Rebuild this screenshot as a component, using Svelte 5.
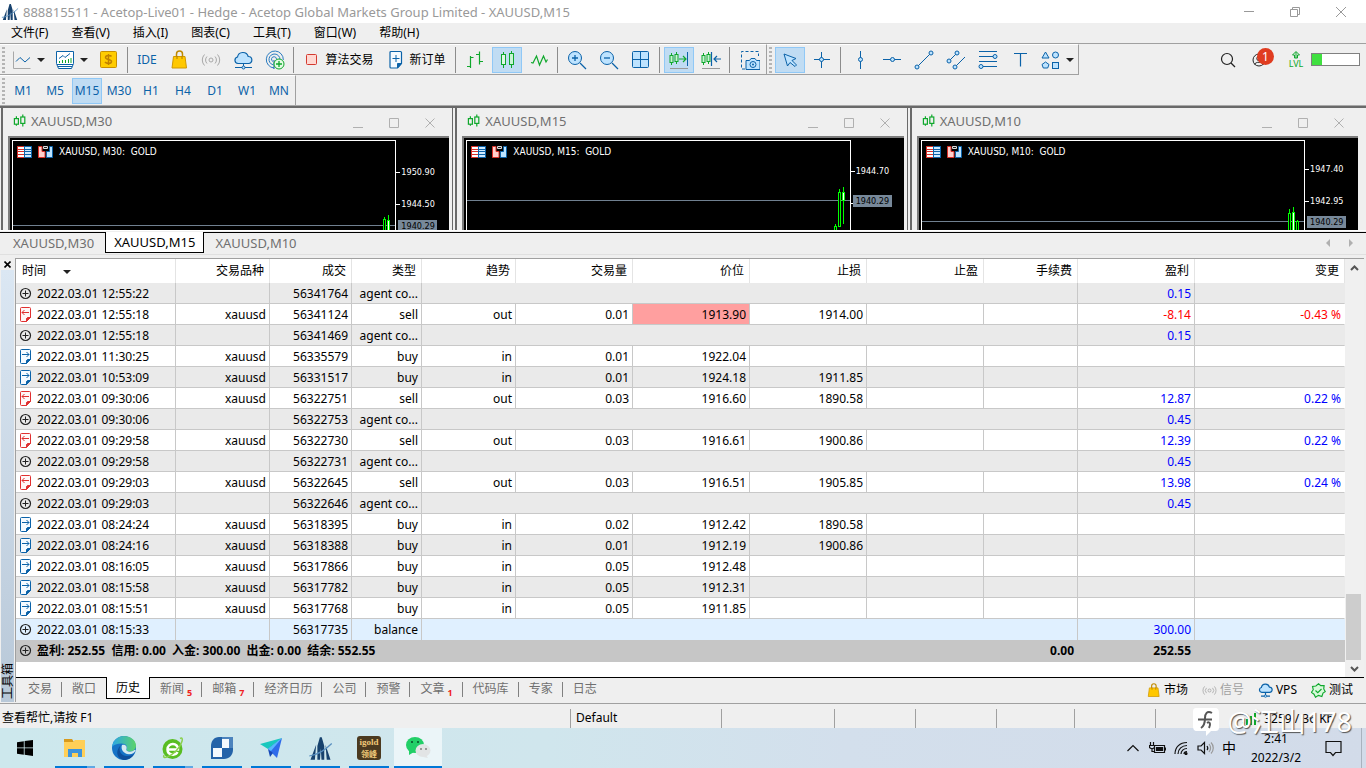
<script>
  const menus = ['文件(F)', '查看(V)', '插入(I)', '图表(C)', '工具(T)', '窗口(W)', '帮助(H)'];
  const frames = ['M1', 'M5', 'M15', 'M30', 'H1', 'H4', 'D1', 'W1', 'MN'];

  let frame = $state('M15');
  let chartTab = $state('XAUUSD,M15');
  let boxTab = $state('历史');

  const B = '#0b62a8';
  const L = '#bde3ff';
  const G = '#0fa82c';
  const R = '#e03030';

  // inner svg markup, drawn on a 20x20 grid
  const icons = {
    line: `<path d="M1.5 1.5v17h17" stroke="#a8a8a8"/><path d="M4 11.5l4-4 5 4.5 5-4.5" stroke="${B}"/>`,
    indicator: `<path d="M1.5 1.5h17v12l-2 5h-13l-2-5z" fill="#fff" stroke="${B}"/><path d="M2 14.5h16M3 16.5h14" stroke="${B}"/><path d="M4 8.5l4-3 2 2 5-4" stroke="${B}"/><path d="M4.5 13v-2M7.5 13v-3M10.5 13v-3M13.5 13v-4M16 13v-5" stroke="${G}"/>`,
    dollar: `<rect x="1.5" y="1.5" width="16" height="16" rx="1" fill="#ffcc00" stroke="#c89000"/><path d="M12.5 6.5c-1-1.5-6-1.5-6 1s6 1.5 6 4-5 2.5-6.5.5M9.5 4v11" stroke="#c08000" stroke-width="1.5"/>`,
    bag: `<path d="M7.5 7V4a3 3 0 0 1 6 0v3" stroke="#c08a00" stroke-width="1.5"/><path d="M4.5 6.5h11.5l1.5 11.5h-14.5z" fill="#ffc800" stroke="#d09800"/><path d="M8 6v3M13 6v3" stroke="#b07c00"/>`,
    signal: `<circle cx="10" cy="10" r="2"/><path d="M6 6.5a5 5 0 0 0 0 7M14 6.5a5 5 0 0 1 0 7M3.5 4.5a8 8 0 0 0 0 11M16.5 4.5a8 8 0 0 1 0 11"/>`,
    cloud: `<path d="M5 13.5a3.3 3.3 0 0 1-.5-6.5 5.5 5.5 0 0 1 10.7-.5 3.5 3.5 0 0 1 .3 7z" fill="${L}" stroke="${B}" stroke-width="1.2"/><path d="M10.5 14v2M2 17.5h17" stroke="${B}"/><circle cx="10.5" cy="17.5" r="1.5" fill="${L}" stroke="${B}"/>`,
    vps: `<path d="M5 12.5a3.3 3.3 0 0 1-.5-6.5 5.5 5.5 0 0 1 10.7-.5 3.5 3.5 0 0 1 .3 7z" fill="${L}" stroke="${B}" stroke-width="1.6"/><path d="M10 13v4M4 17.5h12" stroke="${B}" stroke-width="1.6"/><circle cx="10" cy="17.5" r="1.6" fill="${L}" stroke="${B}"/>`,
    radar: `<path d="M9 18a8.5 8.5 0 1 1 9.3-8M8 14.8a5.5 5.5 0 1 1 7-5.3M8 11.5a2.5 2.5 0 1 1 3.5-2.5" stroke="#2b7cc0"/><path d="M9 10v9" stroke="${B}"/><circle cx="14" cy="14" r="5" fill="#e4fbe4" stroke="${G}"/><path d="M14 11v6M11 14h6" stroke="${G}" stroke-width="1.3"/>`,
    algo: `<rect x="4.5" y="4.5" width="10" height="10" rx="1" fill="#ffd8d2" stroke="#d43a30"/>`,
    order: `<path d="M5 1.5h9.5a1 1 0 0 1 1 1v11l-4 4.5H5a1 1 0 0 1-1-1V2.5a1 1 0 0 1 1-1z" fill="#f4faff" stroke="${B}" stroke-width="1.2"/><path d="M15.5 13.5l-4 4.5v-4.5z" fill="${B}" stroke="${B}"/><path d="M10 5v7M6.5 8.5h7" stroke="${B}"/>`,
    bars: `<path d="M5.5 6v12M2 16.5h3.5M5.5 7.5h3M14.5 1.5v13M11 4.5h3.5M14.5 11.5h3.5" stroke="${G}" stroke-width="1.2"/>`,
    candles: `<path d="M6.5 2v16M14.5 1v17" stroke="${G}"/><rect x="4.5" y="4.5" width="4" height="10" fill="#dff7e6" stroke="${G}"/><rect x="12.5" y="3.5" width="4" height="11" fill="#c8f4d4" stroke="${G}"/>`,
    zigzag: `<path d="M2 12.5l2 .5 3.5-7 3 9 4-9 2.5 6 1.5-2.5" stroke="${G}" stroke-width="1.2"/>`,
    plus: `<circle cx="8" cy="8" r="6.5" fill="${L}" stroke="${B}"/><path d="M13 13l6 6" stroke="${B}" stroke-width="1.3"/><path d="M8 5v6M5 8h6" stroke="${B}" stroke-width="1.3"/>`,
    minus: `<circle cx="8" cy="8" r="6.5" fill="${L}" stroke="${B}"/><path d="M13 13l6 6" stroke="${B}" stroke-width="1.3"/><path d="M5 8h6" stroke="${B}" stroke-width="1.3"/>`,
    tile: `<rect x="1.5" y="1.5" width="16" height="16" rx="1" fill="${L}" stroke="${B}"/><path d="M9.5 2v15M2 9.5h15" stroke="${B}"/>`,
    scroll: `<path d="M2.5 3v12M7.5 2v12" stroke="${G}"/><rect x="1" y="5.5" width="3" height="7" fill="#c8f4d4" stroke="${G}"/><rect x="6" y="4.5" width="3" height="7" fill="#c8f4d4" stroke="${G}"/><path d="M10 9h7M14 6l3 3-3 3" stroke="${G}" stroke-width="1.2"/><path d="M18.5 2v14" stroke="${B}"/><path d="M1 18.5h18" stroke="#999"/>`,
    shift: `<path d="M2.5 3v12M7.5 2v12" stroke="${G}"/><rect x="1" y="5.5" width="3" height="7" fill="#c8f4d4" stroke="${G}"/><rect x="6" y="4.5" width="3" height="7" fill="#c8f4d4" stroke="${G}"/><path d="M10.5 2v14M13 9h7M16 6l-3 3 3 3" stroke="${B}" stroke-width="1.2"/><path d="M1 18.5h18" stroke="#999"/>`,
    camera: `<path d="M5 19H1.5V1.5h17V6" stroke="${B}" stroke-dasharray="3 2"/><path d="M6 19.5v-9h3.5l1.5-2h4l1.5 2h3.5v9z" fill="${L}" stroke="${B}"/><circle cx="13" cy="14.5" r="3" stroke="${B}"/><circle cx="13" cy="14.5" r="1" fill="${B}" stroke="none"/>`,
    cursor: `<path d="M4 4l3.5 12 2.5-3.5 5 4 1.5-1.5-4.5-4.5 4-2z" fill="${L}" stroke="${B}"/>`,
    cross: `<path d="M9.5 2v16M2 9.5h16" stroke="${B}"/><circle cx="9.5" cy="9.5" r="2" fill="${L}" stroke="${B}"/>`,
    vline: `<path d="M10.5 1v18" stroke="${B}"/><circle cx="10.5" cy="9.5" r="2" fill="${L}" stroke="${B}"/>`,
    hline: `<path d="M1 9.5h18" stroke="${B}"/><circle cx="10.5" cy="9.5" r="2" fill="${L}" stroke="${B}"/>`,
    trend: `<path d="M3 17L17 3" stroke="${B}"/><circle cx="3" cy="17" r="2" fill="${L}" stroke="${B}"/><circle cx="17" cy="3" r="2" fill="${L}" stroke="${B}"/>`,
    channel: `<path d="M3 11l8-8M9 17L19 7" stroke="${B}"/><circle cx="3" cy="11" r="2" fill="${L}" stroke="${B}"/><circle cx="11" cy="3" r="2" fill="${L}" stroke="${B}"/><circle cx="9" cy="17" r="2" fill="${L}" stroke="${B}"/>`,
    fibo: `<path d="M1 1.5h18M1 6.5h18M1 11.5h18M1 16.5h18" stroke="${B}"/><circle cx="17" cy="6.5" r="2" fill="${L}" stroke="${B}"/><circle cx="3" cy="16.5" r="2" fill="${L}" stroke="${B}"/>`,
    text: `<path d="M4 3.5h13M10.5 3.5v13" stroke="${B}" stroke-width="1.2"/>`,
    shapes: `<path d="M4.5 2l3.5 6h-7z" fill="${L}" stroke="${B}"/><circle cx="14.5" cy="5" r="3" fill="${L}" stroke="${B}"/><path d="M4.5 12l3.5 2.5-1.3 3.5h-4.4l-1.3-3.5z" fill="${L}" stroke="${B}"/><rect x="11.5" y="12.5" width="6" height="6" fill="${L}" stroke="${B}"/>`,
    search: `<circle cx="9" cy="9" r="5.5" stroke="#222" stroke-width="1.2"/><path d="M13 13l4 4" stroke="#222" stroke-width="1.2"/>`,
    user: `<circle cx="7" cy="10" r="6" stroke="#222"/><circle cx="7" cy="8.5" r="2.2" stroke="#222"/><path d="M2.5 14.5c1-3 8-3 9 0" stroke="#222"/>`,
    lvl: `<path d="M10 1.5l3.5 3.5h-2v3h-3v-3h-2zM10 2v6" stroke="${G}"/>`,
    test: `<path d="M10 1l3 2.5h4.5L17 8l2 3.5-3 2L14.5 18 10 16.5 6 19l-2-4-3.5-2.5L3 9 2 4.5l4.5-.5z" fill="#d8fadb" stroke="${G}" stroke-width="1.5"/><path d="M6 10l3 3 5-5" stroke="${G}" stroke-width="1.5"/>`,
    agent: `<circle cx="9.5" cy="10.5" r="5" stroke="#222" stroke-width="1.2"/><path d="M9.5 7.5v6M6.5 10.5h6" stroke="#222"/>`,
    sell: `<path d="M5.5 3.5h8a1 1 0 0 1 1 1v9l-4 4h-5a1 1 0 0 1-1-1v-12a1 1 0 0 1 1-1z" fill="#fff8f8" stroke="${R}"/><path d="M14.5 13.5l-4 4v-3l1-1z" fill="${R}" stroke="${R}"/><path d="M6 8.5h7M8.5 6L6 8.5l2.5 2.5" stroke="${R}"/>`,
    buy: `<path d="M5.5 3.5h8a1 1 0 0 1 1 1v9l-4 4h-5a1 1 0 0 1-1-1v-12a1 1 0 0 1 1-1z" fill="#f6fbff" stroke="${B}"/><path d="M14.5 13.5l-4 4v-3l1-1z" fill="${B}" stroke="${B}"/><path d="M6 8.5h7M10.5 6l2.5 2.5-2.5 2.5" stroke="${B}"/>`,
    mdi: `<path d="M5.5 4v12M13.5 2v15" stroke="${G}" stroke-width="1.5"/><rect x="3" y="7" width="5" height="7" fill="#efefef" stroke="${G}" stroke-width="1.5"/><rect x="11" y="5" width="5" height="8" fill="#efefef" stroke="${G}" stroke-width="1.5"/>`,
    app: `<path d="M9.5 1h1.5l2 7v11h-2.2l-.6-9-.6 9H7.5V8z" fill="#17426e" stroke="none"/><path d="M6.5 7l-4.5 12h3.5zM14 7l4 12h-3z" fill="#17426e" stroke="none"/><path d="M1 16c7-1 12-4 18-10" stroke="#5a90c0"/>`
  };

  const tools = [
    { icon: 'line', label: '图表类型', w: 40, caret: true },
    { icon: 'indicator', label: '指标', w: 42, caret: true },
    { icon: 'dollar', label: '报价' },
    null,
    { text: 'IDE', label: 'IDE' },
    { icon: 'bag', label: '市场' },
    { icon: 'signal', label: '信号', grey: true },
    { icon: 'cloud', label: 'VPS' },
    { icon: 'radar', label: '订阅' },
    null,
    { icon: 'algo', label: '算法交易', text: '算法交易', w: 80 },
    { icon: 'order', label: '新订单', text: '新订单', w: 72 },
    null,
    { icon: 'bars', label: '柱状图' },
    { icon: 'candles', label: '蜡烛图', on: true },
    { icon: 'zigzag', label: '线图' },
    null,
    { icon: 'plus', label: '放大' },
    { icon: 'minus', label: '缩小' },
    { icon: 'tile', label: '平铺' },
    null,
    { icon: 'scroll', label: '自动滚动', on: true },
    { icon: 'shift', label: '图表平移' },
    null,
    { icon: 'camera', label: '截图', w: 32 }
  ];

  const drawTools = [
    { icon: 'cursor', label: '光标', on: true },
    { icon: 'cross', label: '十字线' },
    null,
    { icon: 'vline', label: '垂直线' },
    { icon: 'hline', label: '水平线' },
    { icon: 'trend', label: '趋势线' },
    { icon: 'channel', label: '通道' },
    { icon: 'fibo', label: '斐波那契' },
    { icon: 'text', label: '文本' },
    { icon: 'shapes', label: '图形', w: 40, caret: true }
  ];

  // candles are [x from the right edge, wick top, body top, body bottom, wick bottom, filled]
  const charts = [
    { tf: 'M30', marks: [['1950.90', 32], ['1944.50', 64]], price: 84, candles: [[11, 76, 78, 92, 92], [7, 74, 79, 92, 92, 1]] },
    { tf: 'M15', marks: [['1944.70', 31], ['', 63]], price: 59, candles: [[15, 83, 85, 92, 92], [11, 48, 51, 85, 85], [7, 46, 51, 59, 83, 1]] },
    { tf: 'M10', marks: [['1947.40', 29], ['1942.95', 61]], price: 80, candles: [[15, 68, 72, 92, 92], [11, 66, 71, 92, 92, 1], [7, 79, 80, 92, 92]] }
  ];

  const cols = [
    ['时间', 160], ['交易品种', 94], ['成交', 82], ['类型', 70], ['趋势', 94], ['交易量', 117],
    ['价位', 117], ['止损', 117], ['止盈', 117], ['手续费', 94], ['盈利', 117], ['变更', 150]
  ];

  const agent = (time, id, profit, type = 'agent co...') => ({ time, id, type, profit, wide: true });
  const deal = (time, id, type, vol, price, sl = '', profit = '', change = '') => ({ time, id, type, vol, price, sl, profit, change });

  const rows = [
    agent('12:55:22', 56341764, '0.15'),
    { ...deal('12:55:18', 56341124, 'sell', '0.01', '1913.90', '1914.00', '-8.14', '-0.43 %'), hit: true },
    agent('12:55:18', 56341469, '0.15'),
    deal('11:30:25', 56335579, 'buy', '0.01', '1922.04'),
    deal('10:53:09', 56331517, 'buy', '0.01', '1924.18', '1911.85'),
    deal('09:30:06', 56322751, 'sell', '0.03', '1916.60', '1890.58', '12.87', '0.22 %'),
    agent('09:30:06', 56322753, '0.45'),
    deal('09:29:58', 56322730, 'sell', '0.03', '1916.61', '1900.86', '12.39', '0.22 %'),
    agent('09:29:58', 56322731, '0.45'),
    deal('09:29:03', 56322645, 'sell', '0.03', '1916.51', '1905.85', '13.98', '0.24 %'),
    agent('09:29:03', 56322646, '0.45'),
    deal('08:24:24', 56318395, 'buy', '0.02', '1912.42', '1890.58'),
    deal('08:24:16', 56318388, 'buy', '0.01', '1912.19', '1900.86'),
    deal('08:16:05', 56317866, 'buy', '0.05', '1912.48'),
    deal('08:15:58', 56317782, 'buy', '0.05', '1912.31'),
    deal('08:15:51', 56317768, 'buy', '0.05', '1911.85'),
    agent('08:15:33', 56317735, '300.00', 'balance')
  ];

  const boxTabs = [
    ['交易'], ['敞口'], ['历史'], ['新闻', 5], ['邮箱', 7], ['经济日历'], ['公司'],
    ['预警'], ['文章', 1], ['代码库'], ['专家'], ['日志']
  ];
</script>

{#snippet icon(name, size = 20)}
  <svg class="icon" width={size} height={size} viewBox="0 0 20 20" fill="none" stroke="currentColor" aria-hidden="true">{@html icons[name]}</svg>
{/snippet}

{#snippet toolButtons(list)}
  {#each list as t}
    {#if t}
      <button class="tool" class:on={t.on} class:grey={t.grey} aria-label={t.label} style:width="{t.w ?? 30}px">
        {#if t.icon}{@render icon(t.icon)}{/if}
        {#if t.text}<span class:dark={t.icon}>{t.text}</span>{/if}
        {#if t.caret}<i class="caret"></i>{/if}
      </button>
    {:else}
      <span class="sep"></span>
    {/if}
  {/each}
{/snippet}

<div class="app">
  <header class="title">
    {@render icon('app', 18)}
    <span class="title-text">888815511 - Acetop-Live01 - Hedge - Acetop Global Markets Group Limited - XAUUSD,M15</span>
    <div class="win-buttons">
      <button aria-label="最小化"><svg width="12" height="12" viewBox="0 0 12 12"><path d="M1 5.5h10" /></svg></button>
      <button aria-label="还原"><svg width="12" height="12" viewBox="0 0 12 12"><path d="M1.5 3.5h7v7h-7zM3.5 3v-1.5h7v7h-1.5" /></svg></button>
      <button aria-label="关闭"><svg width="12" height="12" viewBox="0 0 12 12"><path d="M1 1l10 10M11 1L1 11" /></svg></button>
    </div>
  </header>

  <nav class="menu">
    {#each menus as m}<button>{m}</button>{/each}
  </nav>

  <div class="toolbars">
    <div class="toolbar first">
      <span class="grip"></span>
      {@render toolButtons(tools)}
    </div>
    <div class="toolbar">
      <span class="grip"></span>
      {@render toolButtons(drawTools)}
    </div>
    <div class="right-tools">
      <button class="tool" aria-label="搜索">{@render icon('search')}</button>
      <button class="tool" aria-label="账户">{@render icon('user')}<b class="badge">1</b></button>
      <button class="tool lvl" aria-label="LVL">{@render icon('lvl')}<small>LVL</small></button>
      <span class="load"><span></span></span>
    </div>
  </div>

  <div class="frames">
    <div class="toolbar">
      <span class="grip"></span>
      {#each frames as f}
        <button class="tool" class:on={f === frame} onclick={() => (frame = f)}>{f}</button>
      {/each}
    </div>
  </div>

  <main class="workspace">
    {#each charts as c}
      <section class="mdi">
        <div class="mdi-title">
          {@render icon('mdi', 16)}
          <span>XAUUSD,{c.tf}</span>
          <div class="mdi-buttons">
            <button aria-label="最小化"><svg width="10" height="10" viewBox="0 0 10 10"><path d="M0 9.5h10" /></svg></button>
            <button aria-label="最大化"><svg width="10" height="10" viewBox="0 0 10 10"><path d="M.5 .5h9v9h-9z" /></svg></button>
            <button aria-label="关闭"><svg width="10" height="10" viewBox="0 0 10 10"><path d="M.5 .5l9 9M9.5 .5l-9 9" /></svg></button>
          </div>
        </div>
        <div class="chart">
          <div class="plot">
            <div class="plot-head">
              <svg width="15" height="12" viewBox="0 0 15 12"><path d="M0 0h8v12H0z" fill="#d83028" /><path d="M7 0h8v12H7z" fill="#0b62a8" /><path d="M1 1h6v2H1zM1 4h6v1H1zM1 6h6v2H1zM1 9h6v2H1z" fill="#fff" /><path d="M8 1h6v2H8zM8 4h6v1H8zM8 6h6v2H8zM8 9h6v2H8z" fill="#cfeaff" /></svg>
              <svg width="15" height="12" viewBox="0 0 15 12"><path d="M.5 .5h3.5v5h3v6H.5z" fill="#ffd0cc" stroke="#d83028" /><path d="M14.5 .5h-3v5h-3v6h6z" fill="#bde3ff" stroke="#0b62a8" /><path d="M5.5 .5h4v2h-4z" fill="#222" stroke="#ddd" /></svg>
              <span>XAUUSD, {c.tf}:&nbsp; GOLD</span>
            </div>
            <div class="price-line" style:top="{c.price}px"></div>
            <svg class="candles" width="30" height="92" viewBox="0 0 30 92">
              {#each c.candles as [x, wt, bt, bb, wb, filled]}
                <path d="M{30 - x + 0.5} {wt}V{wb}" stroke="#00ff00" />
                <rect x={29 - x + 0.5} y={bt + 0.5} width="2" height={bb - bt} stroke="#00ff00" fill={filled ? '#fff' : '#000'} />
              {/each}
            </svg>
          </div>
          <div class="scale">
            {#each c.marks as [v, y]}
              <span class="mark" style:top="{y - 7}px">{v}</span>
            {/each}
            <span class="price" style:top="{c.price - 4}px">1940.29</span>
          </div>
        </div>
      </section>
    {/each}
  </main>

  <div class="chart-tabs">
    {#each charts as c}
      {@const name = 'XAUUSD,' + c.tf}
      <button class:active={chartTab === name} onclick={() => (chartTab = name)}>{name}</button>
    {/each}
    <div class="arrows">
      <button class="arrow left" aria-label="向左"></button>
      <button class="arrow" aria-label="向右"></button>
    </div>
  </div>

  <section class="toolbox">
    <aside>
      <button class="close" aria-label="关闭"><svg width="7" height="7" viewBox="0 0 7 7"><path d="M.5 .5l6 6M6.5 .5l-6 6" stroke="#000" stroke-width="1.6" /></svg></button>
      <div class="strip"><span>工具箱</span></div>
    </aside>
    <div class="box">
      <div class="history">
        <div class="grid">
          <table>
            <colgroup>{#each cols as [, w]}<col style:width="{w}px" />{/each}</colgroup>
            <thead>
              <tr>{#each cols as [name], i}<th>{name}{#if i === 0}<i class="caret"></i>{/if}</th>{/each}</tr>
            </thead>
            <tbody>
              {#each rows as r}
                <tr class:balance={r.type === 'balance'}>
                  <td class="time">{@render icon(r.wide ? 'agent' : r.type)}2022.03.01 {r.time}</td>
                  <td>{r.wide ? '' : 'xauusd'}</td>
                  <td>{r.id}</td>
                  <td>{r.type}</td>
                  {#if r.wide}
                    <td colspan="6"></td>
                  {:else}
                    <td>{r.type === 'buy' ? 'in' : 'out'}</td>
                    <td>{r.vol}</td>
                    <td class:hit={r.hit}>{r.price}</td>
                    <td>{r.sl}</td>
                    <td></td>
                    <td></td>
                  {/if}
                  <td class="num" class:neg={r.profit[0] === '-'}>{r.profit}</td>
                  <td class="num" class:neg={r.profit[0] === '-'}>{r.change ?? ''}</td>
                </tr>
              {/each}
            </tbody>
            <tfoot>
              <tr>
                <td class="time" colspan="9">{@render icon('agent')}盈利: 252.55&nbsp; 信用: 0.00&nbsp; 入金: 300.00&nbsp; 出金: 0.00&nbsp; 结余: 552.55</td>
                <td>0.00</td>
                <td>252.55</td>
                <td></td>
              </tr>
            </tfoot>
          </table>
        </div>
        <div class="scroll">
          <button aria-label="向上"><svg width="9" height="6" viewBox="0 0 9 6"><path d="M1 5l3.5-3.5L8 5" /></svg></button>
          <div class="thumb"></div>
          <button aria-label="向下"><svg width="9" height="6" viewBox="0 0 9 6"><path d="M1 1l3.5 3.5L8 1" /></svg></button>
        </div>
      </div>
      <div class="box-tabs">
        {#each boxTabs as [name, count]}
          <button class:active={boxTab === name} onclick={() => (boxTab = name)}>{name}{#if count}<sub>{count}</sub>{/if}</button>
        {/each}
        <div class="services">
          <button>{@render icon('bag', 15)}市场</button>
          <button class="grey">{@render icon('signal', 15)}信号</button>
          <button>{@render icon('vps', 15)}VPS</button>
          <button>{@render icon('test', 15)}测试</button>
        </div>
      </div>
    </div>
  </section>

  <footer class="status">
    <span class="help">查看帮忙,请按 F1</span>
    <span class="profile">Default</span>
    <span class="c3"></span>
    <span class="c4"></span>
    <span class="c4"></span>
    <span class="c5"></span>
    <span class="c4"></span>
    <span class="net">
      <svg width="14" height="12" viewBox="0 0 14 12"><path d="M0 9h2v3H0zM4 6h2v6H4zM8 3h2v9H8zM12 0h2v12h-2z" fill="#0fa82c" /></svg>
      3259 / 36 Kb
    </span>
  </footer>

  <div class="taskbar">
    <button class="app-btn start" aria-label="开始">
      <svg width="16" height="16" viewBox="0 0 16 16"><path d="M0 2.2l6.8-1v6.3H0zM7.6 1.1L16 0v7.5H7.6zM0 8.3h6.8v6.4l-6.8-1zM7.6 8.3H16V16l-8.4-1.2z" /></svg>
    </button>
    <button class="app-btn multi" aria-label="文件资源管理器">
      <svg width="24" height="24" viewBox="0 0 24 24"><path d="M1 3h8l2 3H1z" fill="#d89a1c" /><path d="M1 6h9l2-2h10v17H1z" fill="#ffcf57" /><path d="M5 21v-8h14v8h-4v-4h-6v4z" fill="#3d94dc" /></svg>
    </button>
    <button class="app-btn" aria-label="Edge">
      <svg width="24" height="24" viewBox="0 0 24 24"><defs><linearGradient id="eg" x1="0" x2="1"><stop offset="0" stop-color="#2ba6e6" /><stop offset="1" stop-color="#5bd36a" /></linearGradient></defs><circle cx="12" cy="12" r="12" fill="#1673c6" /><path d="M0 11C1 4 6 0 12 0s12 4 12 9.5c0 4-3 6-6 6-2.5 0-4-1-3.5-2 1.5-3-.5-6-5-6C5 7.5 1.5 9 0 11z" fill="url(#eg)" /><path d="M9 9c-3 4-1 10 5 11 4 .5 7-1 8.500-3C20 22 16 24 12 24c-6-1-10-8-3-15z" fill="#0e4f9c" /><path d="M10 9c4-1 5.5 2 4.3 4.5-.5 2 5 3.5 8 .5l1.5 0c-1 3-4 4.5-7 4.3-5-.3-8.500-5-6.800-9.300z" fill="#d4e9f0" /></svg>
    </button>
    <button class="app-btn multi" aria-label="浏览器">
      <svg width="24" height="24" viewBox="0 0 24 24" fill="none"><circle cx="11.5" cy="13" r="10" fill="#58bd22" /><path d="M6.5 13.5h10.5c.5-7-10.5-7.5-10.5 0 0 6 8 6.5 10 2.5" stroke="#fff" stroke-width="2.5" /><path d="M3 19c-2 5 6 2 12-4S23.5 0 19 2.5" stroke="#8ad04c" stroke-width="1.5" /></svg>
    </button>
    <button class="app-btn" aria-label="行情">
      <svg width="24" height="24" viewBox="0 0 24 24"><path d="M9 1h14v13c0 5-4 9-9 9H1V10c0-5 3-9 8-9z" fill="#2463a8" /><path d="M12 1h11v11H12z" fill="#4c83bd" /><path d="M3 12h9v9H3zM12 3h7v9h-7z" fill="#f4f9fd" /></svg>
    </button>
    <button class="app-btn" aria-label="飞书">
      <svg width="24" height="24" viewBox="0 0 24 24"><path d="M1 8L23 2 9 13z" fill="#19c8be" /><path d="M23 2l-5 20-9-9z" fill="#2f6bea" /><path d="M9 13l2 8 3-4z" fill="#1648b8" /><path d="M23 2L9 13l3 2z" fill="#56b8ff" /></svg>
    </button>
    <button class="app-btn" aria-label="MetaTrader">{@render icon('app', 25)}</button>
    <button class="app-btn" aria-label="igold"><span class="igold">igold<br /><em>领峰</em></span></button>
    <button class="app-btn current" aria-label="微信">
      <svg width="26" height="24" viewBox="0 0 26 24"><ellipse cx="10" cy="9" rx="9" ry="8" fill="#21cf67" /><path d="M4 14l0 5 5-3z" fill="#21cf67" /><ellipse cx="18" cy="14.5" rx="7.5" ry="6.5" fill="#e2e4e5" /><path d="M21 19l2 3-5-1z" fill="#e2e4e5" /><path d="M6 5h2v2H6zM12 5h2v2h-2z" fill="#0b6b35" /><path d="M15 12h2v2h-2zM20 12h2v2h-2z" fill="#999" /></svg>
    </button>
    <div class="tray">
      <button aria-label="显示隐藏的图标"><svg width="14" height="10" viewBox="0 0 14 10"><path d="M1.5 8L7 2.5 12.5 8" /></svg></button>
      <button aria-label="电源"><svg width="17" height="14" viewBox="0 0 17 14"><path d="M5.5 4.5h10v7h-10zM16.5 6.5v3M1.5 1v3M4.5 1v3M.5 4.5h5v2l-1.5 1h-2l-1.5-1zM3 7.5v3h2" /><path d="M7.5 6.5h6v3h-6z" fill="#111" /></svg></button>
      <button aria-label="网络"><svg width="14" height="14" viewBox="0 0 14 14"><path d="M1 13C1 6 6 1.5 13 1.5M4 13c0-5 4-8.5 9-8.5M7 13c0-3 2.5-5.5 6-5.5M10 13c0-1.5 1-2.5 3-2.5" /><circle cx="12" cy="12.5" r="1" fill="#111" /></svg></button>
      <button aria-label="音量"><svg width="17" height="14" viewBox="0 0 17 14"><path d="M1 5h3l3.5-3.5v11L4 9H1zM10 5c1 1.5 1 3 0 4" /><path d="M12 3c2 2.5 2 5.5 0 8M14 1.5c3 3 3 8 0 11" stroke="#999" /></svg></button>
      <button class="ime">中</button>
      <button class="clock"><span>2:41</span><span>2022/3/2</span></button>
      <button class="note" aria-label="通知"><svg width="17" height="17" viewBox="0 0 17 17"><path d="M1 1.5h15v11h-5.5l-2.5 3-2.5-3H1z" /></svg></button>
      <span class="desk"></span>
    </div>
  </div>

  <div class="credit">
    <svg width="28" height="30" viewBox="0 0 28 30" fill="none"><path d="M4 1h19c3 0 4 2 4 5v14c0 3-1 4-4 4h-4l-5 5 0-5H5c-3 0-4-2-4-5V5c0-3 1-4 3-4z" fill="#fff" /><path d="M20 6c-5-3-7 1-7 5s-1 8-4 10M6 12.5h14M15 16c3-2 4 1 2 5" stroke="#555" stroke-width="2" /></svg>
    <span>@江山178</span>
  </div>
</div>

<style>
  :global(body) {
    margin: 0;
    background: #f0f0f0;
  }

  .app {
    position: relative;
    display: flex;
    flex-direction: column;
    min-height: 100vh;
    overflow: hidden;
    background: #efefef;
    font-family: "Noto Sans", "Noto Sans CJK SC", sans-serif;
    font-size: 12px;
    line-height: 16px;
    color: #000;
  }

  button {
    display: flex;
    align-items: center;
    justify-content: center;
    box-sizing: border-box;
    padding: 0;
    border: none;
    background: none;
    font: inherit;
    color: inherit;
    white-space: nowrap;
  }

  .icon {
    flex: none;
  }

  /* title and menu */
  .title {
    display: flex;
    align-items: center;
    height: 23px;
    padding-left: 1px;
    background: #fff;
    color: #999;
    font-size: 13px;
  }

  .title-text {
    flex: 1;
    margin-left: 4px;
  }

  .win-buttons {
    display: flex;
    padding-right: 2px;
  }

  .win-buttons button {
    width: 46px;
    height: 22px;
  }

  .win-buttons svg,
  .mdi-buttons svg {
    fill: none;
    stroke: #999;
  }

  .menu {
    display: flex;
    gap: 23px;
    height: 20px;
    padding-left: 11px;
    border-bottom: 1px solid #a0a0a0;
  }

  /* toolbars */
  .toolbars {
    display: flex;
    height: 31px;
  }

  .toolbar {
    display: flex;
    align-items: center;
    gap: 2px;
    box-sizing: border-box;
    height: 31px;
    padding-right: 1px;
    border-top: 1px solid #fff;
    border-right: 1px solid #a0a0a0;
    border-bottom: 1px solid #a0a0a0;
  }

  .toolbar.first {
    padding-right: 0;
  }

  .grip {
    width: 3px;
    height: 26px;
    margin: 0 1px 0 2px;
    background: repeating-linear-gradient(#b4b4b4 0 2px, transparent 2px 4px);
  }

  .tool {
    position: relative;
    flex: none;
    width: 30px;
    height: 26px;
    border: 1px solid transparent;
    color: #0b62a8;
  }

  .tool.on {
    border-color: #90c8f6;
    background: #c0dcf3;
  }

  .grey {
    color: #a8a8a8;
  }

  .dark {
    margin-left: 3px;
    color: #000;
  }

  .caret {
    flex: none;
    margin-left: 5px;
    border: 4px solid transparent;
    border-top-color: #222;
    border-bottom: none;
  }

  .sep {
    flex: none;
    width: 1px;
    height: 26px;
    margin: 0 2px 0 1px;
    background: #8c8c8c;
  }

  .right-tools {
    display: flex;
    align-items: center;
    gap: 4px;
    margin-left: auto;
    padding-right: 6px;
  }

  .badge {
    position: absolute;
    top: 0;
    left: 9px;
    width: 17px;
    height: 17px;
    border-radius: 50%;
    background: #e03c20;
    font-weight: 400;
    line-height: 17px;
    color: #fff;
  }

  .lvl {
    flex-direction: column;
    color: #0fa82c;
  }

  .lvl small {
    margin-top: -11px;
    font-size: 9px;
    line-height: 10px;
  }

  .load {
    width: 47px;
    height: 11px;
    margin-left: -4px;
    border: 1px solid #808080;
    background: #fff;
  }

  .load span {
    display: block;
    width: 22%;
    height: 100%;
    background: #40e040;
  }

  .frames {
    display: flex;
    box-sizing: border-box;
    height: 31px;
    border-bottom: 1px solid #a8a8a8;
  }

  .frames .toolbar {
    height: 30px;
    border-bottom: none;
  }

  /* chart windows */
  .workspace {
    display: flex;
    height: 124px;
    box-sizing: border-box;
    padding: 0 2px 0 1px;
    border-top: 2px solid #696969;
    overflow: hidden;
  }

  .mdi {
    flex: 1;
    min-width: 0;
    border-left: 2px solid #696969;
  }

  .mdi + .mdi {
    box-shadow: -2px 0 #efefef, -3px 0 #696969;
  }

  .mdi-title {
    display: flex;
    align-items: center;
    box-sizing: border-box;
    height: 28px;
    padding: 0 7px 2px 9px;
    color: #707070;
    font-size: 13px;
  }

  .mdi-title > span {
    flex: 1;
    margin-left: 3px;
  }

  .mdi-buttons {
    display: flex;
  }

  .mdi-buttons button {
    width: 36px;
    padding-top: 4px;
  }

  .mdi-buttons svg {
    stroke: #b0b0b0;
  }

  .chart {
    display: flex;
    box-sizing: border-box;
    height: 120px;
    margin: 0 6px 0 5px;
    padding: 2px 0 0 2px;
    border-top: 2px solid #7c7c7c;
    border-left: 2px solid #7c7c7c;
    background: #000;
    color: #fff;
    font-family: "DejaVu Sans Condensed", "DejaVu Sans", sans-serif;
    font-size: 9px;
    line-height: 12px;
  }

  .plot {
    position: relative;
    flex: 1;
    border: 1px solid #fff;
  }

  .plot-head {
    display: flex;
    align-items: center;
    gap: 6px;
    padding: 5px 4px;
  }

  .plot-head span {
    font-size: 10px;
  }

  .price-line {
    position: absolute;
    left: 0;
    right: 0;
    height: 1px;
    background: #708090;
  }

  .candles {
    position: absolute;
    top: 0;
    right: 0;
    fill: none;
  }

  .scale {
    position: relative;
    width: 53px;
  }

  .mark,
  .price {
    position: absolute;
    left: 0;
  }

  .mark {
    display: flex;
    align-items: center;
    gap: 1px;
    height: 14px;
  }

  .mark::before {
    content: "";
    width: 4px;
    height: 1px;
    background: #fff;
  }

  .price {
    left: 2px;
    width: 36px;
    padding-left: 3px;
    background: #778899;
    color: #000;
  }

  .chart-tabs {
    display: flex;
    box-sizing: border-box;
    height: 25px;
    padding-left: 2px;
    border-top: 1px solid #fff;
    border-bottom: 1px solid #e0e0e0;
    background: linear-gradient(#000, #000) 0 1px / 100% 1px no-repeat;
    color: #707070;
    font-size: 13px;
  }

  .chart-tabs > button {
    height: 23px;
    padding: 0 11px;
  }

  .chart-tabs > button.active {
    height: 21px;
    margin-top: 1px;
    padding: 0 8px;
    border: 1px solid #000;
    border-top: none;
    background: #fff;
    color: #000;
  }

  .arrows {
    display: flex;
    align-items: center;
    gap: 19px;
    margin-left: auto;
    padding-right: 13px;
  }

  .arrow {
    border: 4px solid transparent;
    border-left-color: #b0b0b0;
    border-right: none;
  }

  .arrow.left {
    border: 4px solid transparent;
    border-right-color: #b0b0b0;
    border-left: none;
  }

  /* toolbox */
  .toolbox {
    display: flex;
    flex: 1;
    padding: 3px 2px 1px 1px;
    border-bottom: 1px solid #a0a0a0;
  }

  aside {
    display: flex;
    flex-direction: column;
    width: 13px;
    margin-right: 1px;
  }

  .close {
    height: 12px;
  }

  .strip {
    display: flex;
    flex: 1;
    align-items: center;
    background: linear-gradient(#b8c8d8, #dbe7f3);
    writing-mode: vertical-rl;
    transform: rotate(180deg);
  }

  .strip span {
    margin-top: 3px;
    line-height: 13px;
    text-orientation: sideways;
  }

  .box {
    display: flex;
    flex: 1;
    flex-direction: column;
    min-width: 0;
    border-left: 1px solid #a0a0a0;
  }

  .history {
    display: flex;
    flex: 1;
    border-top: 1px solid #a0a0a0;
    background: #fff;
  }

  .grid {
    flex: 1;
  }

  table {
    width: 100%;
    table-layout: fixed;
    border-spacing: 0;
  }

  th,
  td {
    box-sizing: border-box;
    height: 21px;
    padding: 2px 3px 0 2px;
    border-right: 1px solid #c8c8c8;
    border-bottom: 1px solid #c8c8c8;
    line-height: 18px;
    text-align: right;
    white-space: nowrap;
  }

  th {
    height: 24px;
    padding: 0 5px 0 6px;
    border-right-color: #e4e4e4;
    border-bottom: none;
    font-weight: 400;
  }

  th:first-child {
    text-align: left;
  }

  th .caret {
    display: inline-block;
    margin-left: 17px;
    vertical-align: middle;
  }

  tbody tr:nth-child(odd) {
    background: #eaeaea;
  }

  tbody tr.balance {
    background: #e0f0ff;
  }

  .balance td {
    padding-top: 1px;
    border-bottom: none;
  }

  td:last-child {
    border-right-color: transparent;
  }

  td.time {
    padding-left: 0;
    text-align: left;
  }

  td .icon {
    margin: -6px 1px -2px 0;
    vertical-align: middle;
  }

  .hit {
    background: #ff9f9f;
  }

  .num {
    color: #0000ff;
  }

  .num.neg {
    color: #ff0000;
  }

  tfoot td {
    height: 22px;
    padding-top: 0;
    border: none;
    background: #c6c6c6;
    font-weight: 700;
  }

  tfoot td + td {
    padding-right: 4px;
  }

  .scroll {
    display: flex;
    flex-direction: column;
    width: 19px;
    background: #f0f0f0;
  }

  .scroll button {
    height: 17px;
  }

  .scroll svg {
    fill: none;
    stroke: #555;
    stroke-width: 2;
  }

  .thumb {
    height: 66px;
    margin: auto 3px 0 1px;
    background: #cdcdcd;
  }

  .box-tabs {
    display: flex;
    box-sizing: border-box;
    height: 25px;
    border-top: 1px solid #000;
    color: #707070;
  }

  .box-tabs > button {
    position: relative;
    height: 21px;
    padding: 0 10px;
  }

  .box-tabs > button:first-child {
    padding-left: 12px;
  }

  .box-tabs > button::after {
    content: "";
    position: absolute;
    right: 0;
    top: 4px;
    width: 1px;
    height: 15px;
    background: #808080;
  }

  .box-tabs > button:nth-child(2)::after,
  .box-tabs > button.active::after,
  .box-tabs > button:nth-child(12)::after {
    content: none;
  }

  .box-tabs > button.active {
    height: 22px;
    margin-top: -1px;
    padding: 0 9px;
    border: 1px solid #000;
    border-top: none;
    background: #fff;
    color: #000;
  }

  sub {
    margin: 8px 0 0 3px;
    font-size: 9px;
    font-weight: 700;
    line-height: 10px;
    color: #f02020;
  }

  .services {
    display: flex;
    gap: 14px;
    margin-left: auto;
    padding-right: 11px;
    color: #000;
  }

  .services button {
    gap: 3px;
  }

  .services .grey {
    color: #a0a0a0;
  }

  /* status bar and task bar */
  .status {
    display: flex;
    align-items: flex-end;
    height: 24px;
  }

  .status > span {
    box-sizing: border-box;
    height: 19px;
    padding: 1px 5px 0;
    border-right: 1px solid #a0a0a0;
    white-space: nowrap;
  }

  .status .help {
    flex: 1;
    padding-left: 2px;
  }

  .status .profile {
    width: 151px;
  }

  .status .c3 {
    width: 113px;
  }

  .status .c4 {
    width: 81px;
  }

  .status .c5 {
    width: 78px;
  }

  .status .net {
    display: flex;
    align-items: center;
    justify-content: flex-end;
    gap: 8px;
    width: 210px;
    padding-right: 32px;
    border: none;
  }

  .taskbar {
    display: flex;
    gap: 1px;
    height: 40px;
    background: linear-gradient(90deg, #cde8ed, #d0e6ed 40%, #d3dfec 62%, #d2dbe9);
  }

  .app-btn {
    position: relative;
    width: 48px;
    height: 40px;
  }

  .app-btn.start {
    width: 50px;
  }

  .app-btn:not(.start)::after {
    content: "";
    position: absolute;
    left: 4px;
    right: 4px;
    bottom: 0;
    height: 2px;
    background: #0078d7;
  }

  .app-btn.multi::after {
    background: linear-gradient(90deg, #0078d7 80%, #60a8e4 80%);
  }

  .app-btn.current {
    background: #ebf5f8;
  }

  .app-btn.current::after {
    left: 0;
    right: 0;
  }

  .igold {
    width: 24px;
    height: 24px;
    border-radius: 3px;
    background: #4b3a20;
    color: #f0c878;
    font: 700 9px/12px "Liberation Serif", "Noto Sans CJK SC", serif;
  }

  .igold em {
    font-size: 8px;
    font-style: normal;
  }

  .tray {
    display: flex;
    align-items: center;
    margin-left: auto;
  }

  .tray button {
    width: 24px;
    height: 40px;
  }

  .tray svg {
    fill: none;
    stroke: #111;
    stroke-width: 1.2;
  }

  .tray .ime {
    font-size: 14px;
  }

  .tray .clock {
    flex-direction: column;
    gap: 3px;
    width: 70px;
  }

  .tray .note {
    width: 44px;
  }

  .desk {
    width: 4px;
    height: 40px;
    margin-left: 6px;
    border-left: 1px solid #a8b2be;
  }

  /* user stamp over the lower right corner */
  .credit {
    position: absolute;
    right: 14px;
    bottom: 28px;
    display: flex;
    align-items: center;
    gap: 7px;
    color: #fff;
    font-size: 27px;
    line-height: 36px;
    text-shadow: 1px 1px 1px #555;
    pointer-events: none;
  }
</style>
